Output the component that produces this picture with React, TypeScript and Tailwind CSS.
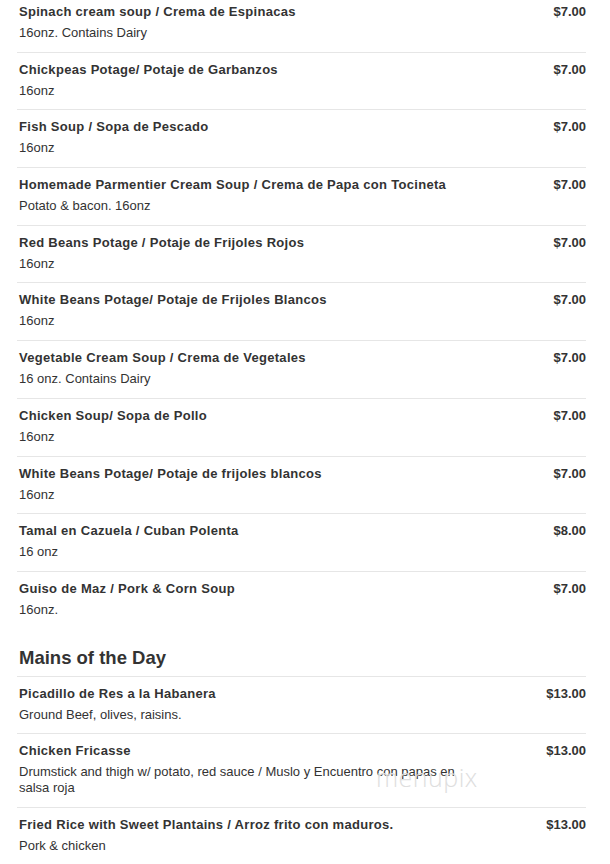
import React from "react";

type Item = { title: string; desc: string; price: string };

const soups: Item[] = [
  { title: "Spinach cream soup / Crema de Espinacas", desc: "16onz. Contains Dairy", price: "$7.00" },
  { title: "Chickpeas Potage/ Potaje de Garbanzos", desc: "16onz", price: "$7.00" },
  { title: "Fish Soup / Sopa de Pescado", desc: "16onz", price: "$7.00" },
  { title: "Homemade Parmentier Cream Soup / Crema de Papa con Tocineta", desc: "Potato & bacon. 16onz", price: "$7.00" },
  { title: "Red Beans Potage / Potaje de Frijoles Rojos", desc: "16onz", price: "$7.00" },
  { title: "White Beans Potage/ Potaje de Frijoles Blancos", desc: "16onz", price: "$7.00" },
  { title: "Vegetable Cream Soup / Crema de Vegetales", desc: "16 onz. Contains Dairy", price: "$7.00" },
  { title: "Chicken Soup/ Sopa de Pollo", desc: "16onz", price: "$7.00" },
  { title: "White Beans Potage/ Potaje de frijoles blancos", desc: "16onz", price: "$7.00" },
  { title: "Tamal en Cazuela / Cuban Polenta", desc: "16 onz", price: "$8.00" },
  { title: "Guiso de Maz / Pork & Corn Soup", desc: "16onz.", price: "$7.00" },
];

const mains: Item[] = [
  { title: "Picadillo de Res a la Habanera", desc: "Ground Beef, olives, raisins.", price: "$13.00" },
  {
    title: "Chicken Fricasse",
    desc: "Drumstick and thigh w/ potato, red sauce / Muslo y Encuentro con papas en salsa roja",
    price: "$13.00",
  },
  { title: "Fried Rice with Sweet Plantains / Arroz frito con maduros.", desc: "Pork & chicken", price: "$13.00" },
];

function Row({ item, last }: { item: Item; last?: boolean }) {
  return (
    <div
      className={
        "flex justify-between pl-[2px] pt-[9px] pb-[10.7px] " + (last ? "" : "border-b border-[#e6e6e6]")
      }
    >
      <div className="w-[450px]">
        <div className="text-[13px] leading-[16px] font-bold text-[#333] tracking-[0.3px]">{item.title}</div>
        <div className="mt-[5px] text-[13px] leading-[16px] text-[#333]">{item.desc}</div>
      </div>
      <div className="text-[13px] leading-[16px] font-bold text-[#333]">{item.price}</div>
    </div>
  );
}

export default function App() {
  return (
    <div
      className="relative w-[610px] h-[864px] overflow-hidden bg-white"
      style={{ fontFamily: '"Liberation Sans", Arial, sans-serif' }}
    >
      <div className="pl-[17px] pr-[24px] -mt-[5px]">
        {soups.map((s, i) => (
          <Row key={i} item={s} last={i === soups.length - 1} />
        ))}
        <div className="mt-[17px] pl-[2px] pb-[6px] border-b border-[#e6e6e6]">
          <h2 className="text-[18.5px] leading-[24px] font-bold text-[#333]">Mains of the Day</h2>
        </div>
        {mains.map((s, i) => (
          <Row key={i} item={s} />
        ))}
      </div>
      <div
        className="absolute left-[376px] top-[762px] text-[25px] leading-[30px] text-[#dedede] tracking-[0.5px]"
        style={{ fontFamily: '"Open Sans", sans-serif', fontWeight: 300 }}
      >
        menupix
      </div>
    </div>
  );
}
